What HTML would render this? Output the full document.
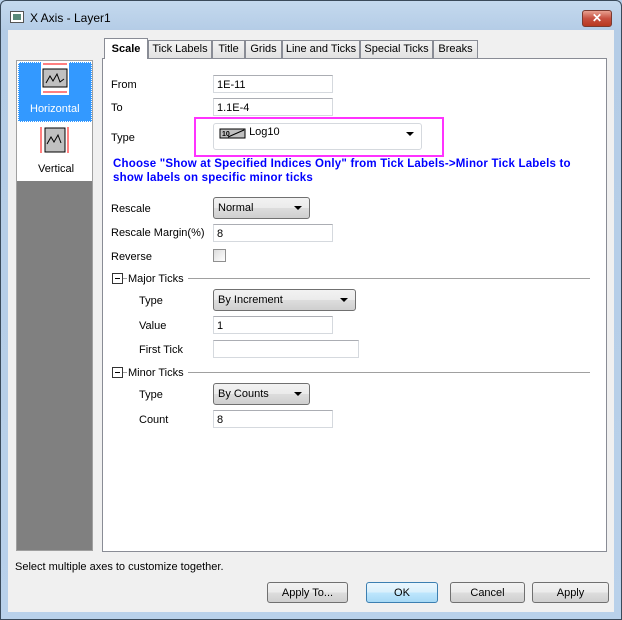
<!DOCTYPE html>
<html><head><meta charset="utf-8"><style>
*{box-sizing:border-box;margin:0;padding:0}
body{width:622px;height:620px;position:relative;overflow:hidden;font-family:"Liberation Sans",sans-serif;font-size:11px;color:#000;background:#b9d1ea}
.a{position:absolute}
.lbl{position:absolute;font-size:11px;line-height:13px;white-space:nowrap}
.in{position:absolute;background:#fff;border:1px solid #d5d9de;border-top-color:#abadb3;font-size:11px;padding:3px 3px 1px;line-height:12px}
.cb{position:absolute;border:1px solid #707070;border-radius:3px;background:linear-gradient(#f2f2f2,#ebebeb 50%,#dddddd 51%,#cfcfcf);font-size:11px;padding:4px 4px 2px;line-height:13px}
.cb:after{content:"";position:absolute;right:7px;top:8px;border-left:4px solid transparent;border-right:4px solid transparent;border-top:4px solid #000}
.tab{position:absolute;top:40px;height:18px;border:1px solid #898c95;border-bottom:none;background:linear-gradient(#f3f3f3,#e2e2e2);font-size:11px;text-align:center;line-height:17px}
.btn{position:absolute;top:582px;height:21px;border:1px solid #707070;border-radius:3px;background:linear-gradient(#f2f2f2,#ebebeb 50%,#dddddd 51%,#cfcfcf);font-size:11px;text-align:center;line-height:20px}
.sec{position:absolute;left:112px;width:478px;height:13px}
.sec .bx{position:absolute;left:0;top:1px;width:11px;height:11px;border:1px solid #333;background:#fff}
.sec .bx:after{content:"";position:absolute;left:2px;top:4px;width:5px;height:1px;background:#000}
.sec .t{position:absolute;left:15px;top:1px;background:#fff;padding:0 4px 0 1px;line-height:13px}
.sec .ln{position:absolute;left:0;right:0;top:6px;height:1px;background:#a0a0a0}
</style></head><body>
<div class="a" style="left:0;top:0;width:622px;height:620px;border:1px solid #3a4a5a;border-radius:6px 6px 0 0;background:linear-gradient(#c4d9ee,#b4cce6 30px,#b9d1ea)"></div>
<div class="a" style="left:10px;top:11px;width:14px;height:12px;border:1px solid #555;background:#fff"><div class="a" style="left:2px;top:2px;width:8px;height:6px;background:#5a8a7a"></div></div>
<div class="lbl" style="left:30px;top:12px;font-size:12px">X Axis - Layer1</div>
<div class="a" style="left:582px;top:10px;width:30px;height:17px;border:1px solid #7a3a30;border-radius:3px;background:linear-gradient(#e8a090,#c75040 50%,#b83820);color:#fff;font-weight:bold;text-align:center;font-size:12px;line-height:15px">✕</div>
<div class="a" style="left:8px;top:30px;width:606px;height:582px;background:#f0f0f0"></div>

<div class="a" style="left:16px;top:60px;width:77px;height:491px;border:1px solid #a0a0a0;background:#808080"></div>
<div class="a" style="left:17px;top:61px;width:75px;height:120px;background:#fff"></div>
<div class="a" style="left:18px;top:62px;width:74px;height:60px;background:#3399ff;border:1px dotted #fff"></div>
<svg class="a" style="left:40px;top:61px" width="30" height="34"><rect x="1" y="0" width="28" height="34" fill="#fff"/><line x1="3" y1="3" x2="27" y2="3" stroke="red"/><line x1="3" y1="31" x2="27" y2="31" stroke="red"/><rect x="3" y="8" width="24" height="18" fill="#c0c0c0" stroke="#000"/><polyline points="6,22 10,15 13,20 17,13 20,21 24,18" fill="none" stroke="#000"/></svg>
<div class="lbl" style="left:30px;top:103px;color:#fff">Horizontal</div>
<svg class="a" style="left:39px;top:125px" width="32" height="30"><line x1="2" y1="2" x2="2" y2="28" stroke="red"/><line x1="29" y1="2" x2="29" y2="28" stroke="red"/><rect x="6" y="3" width="20" height="24" fill="#c0c0c0" stroke="#000"/><polyline points="8,19 12,12 15,17 19,10 22,18" fill="none" stroke="#000"/></svg>
<div class="lbl" style="left:38px;top:163px">Vertical</div>

<div class="a" style="left:102px;top:58px;width:505px;height:494px;background:#fff;border:1px solid #898c95"></div>
<div class="tab" style="left:148px;width:64px">Tick Labels</div>
<div class="tab" style="left:212px;width:33px">Title</div>
<div class="tab" style="left:245px;width:37px">Grids</div>
<div class="tab" style="left:282px;width:78px">Line and Ticks</div>
<div class="tab" style="left:360px;width:73px">Special Ticks</div>
<div class="tab" style="left:433px;width:45px">Breaks</div>
<div class="tab" style="left:104px;top:38px;width:44px;height:21px;background:#fff;font-weight:bold;line-height:20px">Scale</div>

<div class="lbl" style="left:111px;top:79px">From</div>
<div class="in" style="left:213px;top:75px;width:120px;height:18px">1E-11</div>
<div class="lbl" style="left:111px;top:102px">To</div>
<div class="in" style="left:213px;top:98px;width:120px;height:18px">1.1E-4</div>
<div class="lbl" style="left:111px;top:132px">Type</div>
<div class="a" style="left:194px;top:117px;width:250px;height:40px;border:2px solid #ff33ff"></div>
<div class="cb" style="left:213px;top:123px;width:209px;height:27px;background:#fff;border-color:#d5d9de;padding:3px 5px"><svg width="27" height="14" style="vertical-align:top"><rect x="1" y="2" width="25" height="9" fill="#c0c0c0" stroke="#000"/><line x1="9" y1="10" x2="25" y2="3" stroke="#000"/><text x="3" y="9" font-size="7" font-family="Liberation Sans" font-weight="bold">10</text></svg> <span style="position:relative;top:-1px">Log10</span></div>
<div class="lbl" style="left:113px;top:157px;color:#0000ff;font-weight:bold;font-size:11.5px;line-height:14px;letter-spacing:0.2px">Choose "Show at Specified Indices Only" from Tick Labels-&gt;Minor Tick Labels to<br>show labels on specific minor ticks</div>

<div class="lbl" style="left:111px;top:203px">Rescale</div>
<div class="cb" style="left:213px;top:197px;width:97px;height:22px">Normal</div>
<div class="lbl" style="left:111px;top:227px">Rescale Margin(%)</div>
<div class="in" style="left:213px;top:224px;width:120px;height:18px">8</div>
<div class="lbl" style="left:111px;top:251px">Reverse</div>
<div class="a" style="left:213px;top:249px;width:13px;height:13px;border:1px solid #8f8f8f;background:linear-gradient(135deg,#dcdcdc,#fff)"></div>

<div class="sec" style="top:272px"><div class="ln"></div><div class="bx"></div><div class="t">Major Ticks</div></div>
<div class="lbl" style="left:139px;top:295px">Type</div>
<div class="cb" style="left:213px;top:289px;width:143px;height:22px">By Increment</div>
<div class="lbl" style="left:139px;top:320px">Value</div>
<div class="in" style="left:213px;top:316px;width:120px;height:18px">1</div>
<div class="lbl" style="left:139px;top:344px">First Tick</div>
<div class="in" style="left:213px;top:340px;width:146px;height:18px"></div>

<div class="sec" style="top:366px"><div class="ln"></div><div class="bx"></div><div class="t">Minor Ticks</div></div>
<div class="lbl" style="left:139px;top:389px">Type</div>
<div class="cb" style="left:213px;top:383px;width:97px;height:22px">By Counts</div>
<div class="lbl" style="left:139px;top:414px">Count</div>
<div class="in" style="left:213px;top:410px;width:120px;height:18px">8</div>

<div class="lbl" style="left:15px;top:561px">Select multiple axes to customize together.</div>
<div class="btn" style="left:267px;width:81px">Apply To...</div>
<div class="btn" style="left:366px;width:72px;border-color:#3c7fb1;background:linear-gradient(#eaf6fd,#d9f0fc 50%,#bee6fd 51%,#a7d9f5)">OK</div>
<div class="btn" style="left:450px;width:75px">Cancel</div>
<div class="btn" style="left:532px;width:77px">Apply</div>
</body></html>
